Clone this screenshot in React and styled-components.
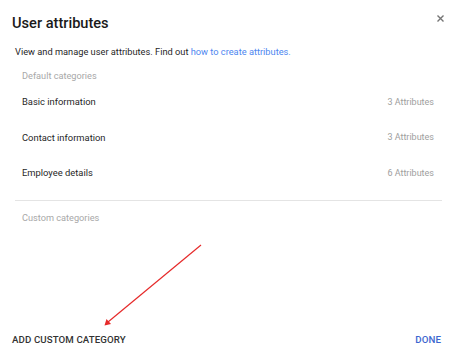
import styled, { createGlobalStyle } from 'styled-components';

const Global = createGlobalStyle`
  html, body {
    margin: 0;
    padding: 0;
    background: #fff;
  }
  body {
    font-family: Roboto, "Liberation Sans", Arial, sans-serif;
    -webkit-font-smoothing: antialiased;
  }
`;

const Dialog = styled.div`
  position: relative;
  width: 460px;
  height: 350px;
  display: flex;
  flex-direction: column;
  box-sizing: border-box;
  background: #fff;
  overflow: hidden;
`;

const Header = styled.div`
  height: 45px;
  display: flex;
  justify-content: space-between;
  padding: 0 14px 0 12px;
  align-items: center;
`;

const Title = styled.h2`
  margin: 0;
  font-size: 14.6px;
  line-height: 20px;
  font-weight: 500;
  color: #1a1a1a;
`;

const Close = styled.button`
  align-self: flex-start;
  margin-top: 12px;
  width: 12px;
  height: 12px;
  padding: 0;
  border: none;
  background: none;
  display: flex;
  align-items: center;
  justify-content: center;
  cursor: pointer;
`;

const Body = styled.div`
  padding: 0 18px 0 15px;
`;

const Description = styled.p`
  margin: 0;
  font-size: 9.25px;
  line-height: 13px;
  color: #1f1f1f;

  a {
    color: #4d86f0;
    text-decoration: none;
  }
`;

const SectionLabel = styled.div`
  margin-top: ${p => p.$top}px;
  padding: 0 7px;
  font-size: 9.2px;
  line-height: 13px;
  color: #a8a8a8;
`;

const List = styled.div`
  margin-top: 2px;
`;

const Row = styled.div`
  height: 35.5px;
  display: flex;
  align-items: center;
  justify-content: space-between;
  padding: 0 8px 0 7px;
`;

const RowName = styled.span`
  font-size: 9.4px;
  color: #1f1f1f;
`;

const RowCount = styled.span`
  font-size: 9px;
  color: #9e9e9e;
`;

const Divider = styled.hr`
  margin: 9px 0 0;
  border: none;
  border-top: 1px solid #e4e4e4;
`;

const Footer = styled.div`
  margin-top: auto;
  height: 22px;
  display: flex;
  align-items: center;
  justify-content: space-between;
  padding: 0 19px 0 12px;
`;

const TextButton = styled.button`
  border: none;
  background: none;
  padding: 0;
  font-family: inherit;
  font-size: 9.7px;
  font-weight: 500;
  letter-spacing: 0.1px;
  color: ${p => (p.$primary ? '#3b66cf' : '#333')};
  cursor: pointer;
`;

const Arrow = styled.svg`
  position: absolute;
  left: 0;
  top: 0;
  pointer-events: none;
`;

const categories = [
  { name: 'Basic information', count: 3 },
  { name: 'Contact information', count: 3 },
  { name: 'Employee details', count: 6 },
];

export default function App() {
  return (
    <>
      <Global />
      <Dialog>
        <Header>
          <Title>User attributes</Title>
          <Close aria-label="Close">
            <svg width="7" height="7" viewBox="0 0 7 7">
              <path d="M0.5 0.5 L6.5 6.5 M6.5 0.5 L0.5 6.5" stroke="#757575" strokeWidth="1.4" />
            </svg>
          </Close>
        </Header>
        <Body>
          <Description>
            View and manage user attributes. Find out <a href="#">how to create attributes.</a>
          </Description>
          <SectionLabel $top={11}>Default categories</SectionLabel>
          <List>
            {categories.map(c => (
              <Row key={c.name}>
                <RowName>{c.name}</RowName>
                <RowCount>{c.count} Attributes</RowCount>
              </Row>
            ))}
          </List>
          <Divider />
          <SectionLabel $top={10}>Custom categories</SectionLabel>
        </Body>
        <Footer>
          <TextButton>ADD CUSTOM CATEGORY</TextButton>
          <TextButton $primary>DONE</TextButton>
        </Footer>
        <Arrow width="460" height="350" viewBox="0 0 460 350">
          <line x1="201" y1="245" x2="108" y2="322" stroke="#e62a2a" strokeWidth="1.2" />
          <path d="M104.5 325.5 L106.5 319 L111 324 Z" fill="#e62a2a" />
        </Arrow>
      </Dialog>
    </>
  );
}
